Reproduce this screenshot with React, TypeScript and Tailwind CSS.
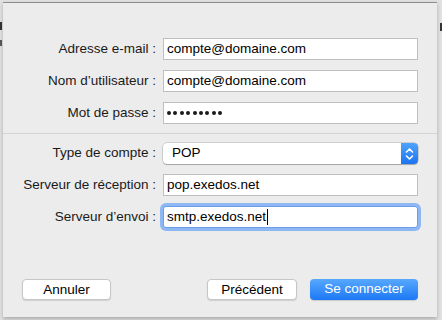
import React from "react";

const font = { fontFamily: '"Liberation Sans", Arial, sans-serif' };

function Row({ label, children, className = "" }: { label: string; children: React.ReactNode; className?: string }) {
  return (
    <div className={"flex items-center " + className}>
      <div className="w-[154px] text-right text-[13.5px] text-[#1a1a1a] pr-[1px] whitespace-nowrap">{label}</div>
      <div className="ml-[6px] w-[255px]">{children}</div>
    </div>
  );
}

function Input({ value, focused = false }: { value: string; focused?: boolean }) {
  if (focused) {
    return (
      <div className="h-[22px] rounded-[3px] ring-[3px] ring-[#8db8f3] border border-[#6a9fe8] bg-white flex items-center pl-[3px] text-[13.5px] text-black">
        <span>{value}</span>
        <span className="w-[1px] h-[16px] bg-black ml-[1px]" />
      </div>
    );
  }
  return (
    <div className="h-[22px] border border-[#bfbfbf] bg-white flex items-center pl-[3px] text-[13.5px] text-black">
      {value}
    </div>
  );
}

export default function App() {
  const dots = [0, 1, 2, 3, 4, 5, 6, 7, 8];
  return (
    <div className="w-[442px] h-[320px] bg-[#e2e2e2] overflow-hidden relative" style={font}>
      <div className="absolute left-0 top-[22px] w-[2px] h-[8px] bg-[#333]" />
      <div className="absolute left-0 top-[40px] w-[2px] h-[6px] bg-[#555]" />
      <div className="absolute right-0 top-[23px] w-[2px] h-[8px] bg-[#333]" />
      <div className="pt-[2px] pl-[3px] pr-[5px]">
        <div className="h-[315px] bg-[#ececec] border-t border-[#8c8c8c] shadow-[0_2px_4px_rgba(0,0,0,0.25)] flex flex-col">
          <div className="pt-[35px] flex flex-col gap-[10px]">
            <Row label="Adresse e-mail :"><Input value="compte@domaine.com" /></Row>
            <Row label="Nom d’utilisateur :"><Input value="compte@domaine.com" /></Row>
            <Row label="Mot de passe :">
              <div className="h-[22px] border border-[#bfbfbf] bg-white flex items-center pl-[3px] gap-[2.4px]">
                {dots.map((d) => (
                  <span key={d} className="w-[4px] h-[4px] rounded-full bg-[#1a1a1a]" />
                ))}
              </div>
            </Row>
          </div>
          <div className="mt-[9px] h-[1px] bg-[#d4d4d4]" />
          <div className="pt-[9px] flex flex-col gap-[10px]">
            <Row label="Type de compte :">
              <div className="h-[21px] rounded-[4px] bg-white shadow-[0_0_0_0.5px_rgba(0,0,0,0.25),0_1px_1px_rgba(0,0,0,0.2)] flex items-center">
                <span className="pl-[9px] text-[13.5px] text-black flex-1">POP</span>
                <div className="w-[17px] h-[21px] rounded-r-[4px] bg-gradient-to-b from-[#4ea3fb] to-[#1b74f0] flex items-center justify-center">
                  <svg width="9" height="14" viewBox="0 0 9 14" fill="none" stroke="white" strokeWidth="1.6" strokeLinecap="round" strokeLinejoin="round">
                    <path d="M1.5 5 L4.5 2 L7.5 5" />
                    <path d="M1.5 9 L4.5 12 L7.5 9" />
                  </svg>
                </div>
              </div>
            </Row>
            <Row label="Serveur de réception :"><Input value="pop.exedos.net" /></Row>
            <Row label="Serveur d’envoi :"><Input value="smtp.exedos.net" focused /></Row>
          </div>
          <div className="mt-auto mb-[17px] flex items-center px-[19px]">
            <button className="w-[89px] h-[21px] rounded-[4px] bg-white border border-[#c6c6c6] shadow-[0_1px_1px_rgba(0,0,0,0.12)] text-[13.5px] text-black">Annuler</button>
            <div className="flex-1" />
            <button className="w-[90px] h-[21px] rounded-[4px] bg-white border border-[#c6c6c6] shadow-[0_1px_1px_rgba(0,0,0,0.12)] text-[13.5px] text-black">Précédent</button>
            <button className="ml-[13px] w-[108px] h-[21px] rounded-[4px] bg-gradient-to-b from-[#56a8fd] to-[#1c78f4] text-[13.5px] text-white shadow-[0_1px_1px_rgba(0,0,0,0.15)]">Se connecter</button>
          </div>
        </div>
      </div>
    </div>
  );
}
